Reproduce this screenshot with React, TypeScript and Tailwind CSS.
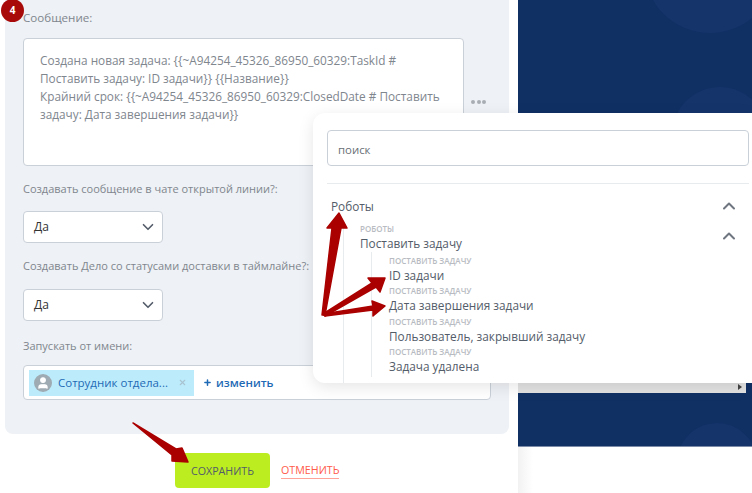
import React from 'react';
import { ChevronDown, ChevronUp, Plus, X, User } from 'lucide-react';

const font = { fontFamily: '"Open Sans", "Noto Sans", sans-serif' };

const SelectBox = ({ top }: { top: string }) => (
  <div className={`${top} flex h-[32px] w-[140px] items-center justify-between rounded border border-[#c9d0d8] bg-white pl-[10px] pr-[3px] text-[12px] text-[#333]`}>
    <span>Да</span>
    <ChevronDown className="mr-[2px] h-[18px] w-[18px] text-[#535c69]" strokeWidth={2.2} />
  </div>
);

const fields = [
  'ID задачи',
  'Дата завершения задачи',
  'Пользователь, закрывший задачу',
  'Задача удалена',
];

const App = () => {
  return (
    <div className="relative flex h-[493px] w-[752px] overflow-hidden bg-white" style={font}>
      {/* Left form */}
      <div className="w-[518px] shrink-0 pl-[5px] pr-[9px]">
        <div className="relative h-[434px] rounded-b-lg bg-[#eef1f5] pl-[18px] pr-[18px] pt-[9px]">
          <div className="text-[11.6px] leading-[18px] text-[#80868e]">Сообщение:</div>
          <div className="mt-[11px] h-[128px] w-[441px] whitespace-nowrap rounded border border-[#c9d0d8] bg-white px-[16px] pt-[12px] text-[11.8px] leading-[18px] text-[#80868e]">
            Создана новая задача: {'{{~A94254_45326_86950_60329:TaskId #'}
            <br />
            Поставить задачу: ID задачи{'}}'} {'{{Название}}'}
            <br />
            Крайний срок: {'{{~A94254_45326_86950_60329:ClosedDate # Поставить'}
            <br />
            задачу: Дата завершения задачи{'}}'}
          </div>
          <div className="absolute left-[466px] top-[100px] flex gap-[1.5px]">
            <span className="h-[4px] w-[4px] rounded-full bg-[#a8adb4]" />
            <span className="h-[4px] w-[4px] rounded-full bg-[#a8adb4]" />
            <span className="h-[4px] w-[4px] rounded-full bg-[#a8adb4]" />
          </div>

          <div className="mt-[14px] text-[11px] leading-[18px] text-[#80868e]">
            Создавать сообщение в чате открытой линии?:
          </div>
          <SelectBox top="mt-[13px]" />
          <div className="mt-[14px] text-[11px] leading-[18px] text-[#80868e]">
            Создавать Дело со статусами доставки в таймлайне?:
          </div>
          <SelectBox top="mt-[14px]" />
          <div className="mt-[16px] text-[11px] leading-[18px] text-[#80868e]">Запускать от имени:</div>
          <div className="mt-[10px] flex h-[35px] w-[468px] items-center rounded-sm border border-[#c9d0d8] bg-white pl-[5px]">
            <div className="flex h-[26px] w-[165px] shrink-0 items-center bg-[#bcecfc] pl-[5px] text-[11.5px] text-[#1f6ab5]">
              <span className="flex h-[18px] w-[18px] shrink-0 items-center justify-center overflow-hidden rounded-full bg-[#9eabb3]">
                <User className="h-[14px] w-[14px] text-white" fill="white" />
              </span>
              <span className="ml-[6px] w-[109px] shrink-0 whitespace-nowrap">Сотрудник отдела...</span>
              <X className="ml-[11px] h-[9px] w-[9px] shrink-0 text-[#a9c4d0]" strokeWidth={3} />
            </div>
            <Plus className="ml-[9px] h-[9px] w-[9px] text-[#1f6ab5]" strokeWidth={4} />
            <span className="ml-[4px] text-[11.5px] font-semibold text-[#1f6ab5]">изменить</span>
          </div>
        </div>
        <div className="mt-[19px] flex items-center pl-[170px]">
          <div className="flex h-[35px] w-[95px] items-center justify-center rounded bg-[#bbed21] pt-px text-[10.7px] text-[#535c69]">
            СОХРАНИТЬ
          </div>
          <span className="ml-[11px] border-b border-[#ffa399] text-[10.7px] leading-[15px] text-[#ff5b4b]">
            ОТМЕНИТЬ
          </span>
        </div>
      </div>

      {/* Right side */}
      <div className="relative flex-1">
        <div className="relative h-[447px] overflow-hidden bg-[#102f63]">
          <div className="absolute left-[126px] top-[-99px] h-[132px] w-[132px] rounded-full bg-[#15346a]" />
          <div className="absolute left-[154px] top-[87px] h-[96px] w-[96px] rounded-full bg-[#15346a]" />
          <div className="absolute left-[159px] top-[423px] h-[80px] w-[80px] rounded-full bg-[#15346a]" />
          <div className="absolute left-0 top-[383px] h-[10px] w-[228px] bg-[#e2e2e2]" />
          <div className="absolute left-[220px] top-[384px] h-0 w-0 border-y-[3px] border-l-[4px] border-y-transparent border-l-[#444]" />
          <div className="absolute left-0 top-[446px] h-px w-full bg-[#7b8ba8]" />
        </div>
        <div className="h-[46px] w-[15px] bg-gradient-to-r from-[#f2f2f2] to-white" />
      </div>

      {/* Badge */}
      <div className="absolute left-[1px] top-[-1px] flex h-[23px] w-[23px] items-center justify-center rounded-full bg-[#a80a0a] text-[10px] font-bold text-white">
        4
      </div>

      {/* Variable popup */}
      <div className="absolute left-[313px] top-[113px] h-[270px] w-[439px] overflow-hidden rounded-l-xl bg-white pl-[14px] pr-[3px]">
        <div className="mt-[17px] flex h-[36px] items-center rounded border border-[#c9d0d8] pl-[10px] pt-[3px] text-[11.4px] text-[#6a6f76]">
          поиск
        </div>
        <div className="mt-[17px] h-px bg-[#e8ebee]" />
        <div className="relative">
          <div className="flex h-[43px] items-center justify-between pl-[4px] pr-[10px] pt-[2px] text-[11.8px] text-[#535c69]">
            <span>Роботы</span>
            <ChevronUp className="-mt-[2px] h-[20px] w-[20px] text-[#6f7680]" strokeWidth={2.4} />
          </div>
          <div className="absolute bottom-[-47px] left-[16px] top-[43px] w-px bg-[#e8ebee]" />
          <div className="pl-[33px] pr-[10px]">
            <div className="-mt-[3px] text-[8px] font-semibold uppercase leading-[10px] text-[#b8bcc2]">Роботы</div>
            <div className="flex items-start justify-between">
              <span className="text-[11.8px] leading-[18px] text-[#535c69]">Поставить задачу</span>
              <ChevronUp className="-mt-[8px] h-[20px] w-[20px] text-[#6f7680]" strokeWidth={2.4} />
            </div>
            <div className="ml-[11px] border-l border-[#e8ebee] pl-[17px] pt-[4px]">
              {fields.map(name => (
                <div key={name} className="h-[30.3px]">
                  <div className="text-[8px] font-semibold uppercase leading-[10px] text-[#b8bcc2]">
                    Поставить задачу
                  </div>
                  <div className="text-[11.8px] leading-[19px] text-[#535c69]">{name}</div>
                </div>
              ))}
            </div>
          </div>
        </div>
      </div>

      {/* Popup shadow */}
      <div className="pointer-events-none absolute left-[313px] top-[113px] h-[270px] w-[439px] rounded-l-xl shadow-[0_4px_16px_rgba(0,0,0,0.1)]" />

      {/* Red arrows drawn on top */}
      <svg className="pointer-events-none absolute left-0 top-0" width="752" height="493" viewBox="0 0 752 493">
        <g fill="#aa0000" stroke="#aa0000" strokeLinejoin="round">
          <path d="M133 423 L176 449 L182 448 L188 462 L172 461 L172 455 Z" strokeWidth="1.5" />
          <path d="M322 315 L332 228 L327 228 L339 213 L347 228 L341 228 L325 315 Z" strokeWidth="1.5" />
          <path d="M323 314 L372 283 L368 278 L385 278 L380 292 L376 287 L325 316 Z" strokeWidth="1.5" />
          <path d="M323 314 L373 306 L372 301 L385 306 L373 316 L373 310 L325 316 Z" strokeWidth="1.5" />
        </g>
      </svg>
    </div>
  );
};

export default App;
